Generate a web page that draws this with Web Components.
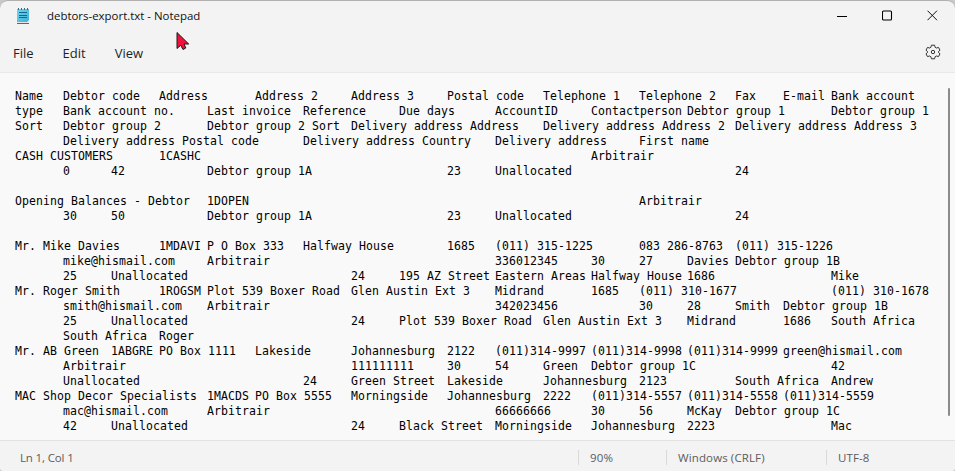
<!DOCTYPE html>
<html lang="en">
<head>
<meta charset="utf-8">
<title>debtors-export.txt - Notepad</title>
<style>
html,body{margin:0;height:100%;overflow:hidden;background:#c9c9c9}
</style>
</head>
<body>
<notepad-window></notepad-window>
<script>
const define = (name, html, setup) => customElements.define(name, class extends HTMLElement {
  constructor() {
    super();
    this.attachShadow({mode: 'open'}).innerHTML = html;
  }
  connectedCallback() { if (setup) setup(this, this.shadowRoot); }
});

define('app-icon', `<style>:host{display:block;width:13px;height:17px}svg{display:block}</style>
<svg width="13" height="17" viewBox="0 0 13 17">
<defs><linearGradient id="g" x1="0" y1="0" x2="1" y2="1"><stop offset="0" stop-color="#6fd6ee"/><stop offset="1" stop-color="#3fb0d8"/></linearGradient></defs>
<path d="M0 14h10l2-2v3H0z" fill="#e8e4df"/><path d="M0 15h12v1H0z" fill="#a8501f"/>
<path d="M0 1h12v11l-2 2H0z" fill="url(#g)"/>
<path d="M1.500 0v2M4.500 0v2M7.500 0v2M10.500 0v2" stroke="#2f6f88"/>
<path d="M2 4.500h8M2 7.500h8M2 9.500h8" stroke="#14688b"/></svg>`);

define('window-controls', `<style>:host{display:flex;align-items:center;gap:34px}svg{display:block}</style>
<svg width="11" height="11" viewBox="0 0 11 11"><path d="M0 6.500h10" stroke="#000"/></svg>
<svg width="11" height="11" viewBox="0 0 11 11"><rect x=".5" y="1" width="9" height="9" rx="1" fill="none" stroke="#000" stroke-width="1.100"/></svg>
<svg width="11" height="11" viewBox="0 0 11 11"><path d="M.5.7l9.500 9.500M10 .7L.5 10.200" stroke="#111"/></svg>`);

define('title-bar', `<style>
:host{display:flex;align-items:center;height:28px;padding:0 16px 0 17px;font-size:11.450px;color:#111}
app-icon{margin:2px 17px 0 0}span{flex:1;white-space:pre}
window-controls{margin-right:1px}
</style><app-icon></app-icon><span><slot></slot></span><window-controls></window-controls>`);

define('settings-gear', `<style>:host{display:block;width:16px;height:16px}svg{display:block}</style>
<svg width="16" height="16" viewBox="0 0 16 16" fill="none" stroke="#333" stroke-linejoin="round">
<path d="M6.400 1.200h3.200l.5 2.100 1.300.7 2.100-.6 1.500 2.800-1.500 1.300v1l1.500 1.300-1.500 2.800-2.100-.6-1.300.7-.5 2.100H6.400l-.5-2.100-1.300-.7-2.100.6L1 9.800l1.500-1.300v-1L1 6.200l1.500-2.800 2.100.6 1.300-.7z"/><circle cx="8" cy="8" r="1.700"/></svg>`);

define('menu-bar', `<style>
:host{display:flex;align-items:center;height:43px;padding:5px 14px 0 13px;font-size:13px;color:#1f1f1f;box-sizing:border-box}
div{flex:1;display:flex;gap:29px}
settings-gear{margin-top:-3px}
</style><div><slot></slot></div><settings-gear></settings-gear>`);

define('text-line', `<style>
:host{display:grid;grid-template-columns:repeat(18,48px);height:15px;line-height:15px;white-space:pre}
span{grid-row:1;width:0}
</style>`, (el, root) => {
  for (const part of el.getAttribute('cells').split(';')) {
    if (!part) continue;
    const m = part.match(/^(\d+) (.*)$/);
    const s = document.createElement('span');
    s.style.gridColumn = +m[1] + 1;
    s.textContent = m[2];
    root.append(s);
  }
});

const LINES = `0 Name;1 Debtor code;3 Address;5 Address 2;7 Address 3;9 Postal code;11 Telephone 1;13 Telephone 2;15 Fax;16 E-mail;17 Bank account
0 type;1 Bank account no.;4 Last invoice;6 Reference;8 Due days;10 AccountID;12 Contactperson;14 Debtor group 1;17 Debtor group 1
0 Sort;1 Debtor group 2;4 Debtor group 2 Sort;7 Delivery address Address;11 Delivery address Address 2;15 Delivery address Address 3
1 Delivery address Postal code;6 Delivery address Country;10 Delivery address;13 First name
0 CASH CUSTOMERS;3 1CASHC;12 Arbitrair
1 0;2 42;4 Debtor group 1A;9 23;10 Unallocated;15 24

0 Opening Balances - Debtor;4 1DOPEN;13 Arbitrair
1 30;2 50;4 Debtor group 1A;9 23;10 Unallocated;15 24

0 Mr. Mike Davies;3 1MDAVI;4 P O Box 333;6 Halfway House;9 1685;10 (011) 315-1225;13 083 286-8763;15 (011) 315-1226
1 mike@hismail.com;4 Arbitrair;10 336012345;12 30;13 27;14 Davies;15 Debtor group 1B
1 25;2 Unallocated;7 24;8 195 AZ Street;10 Eastern Areas;12 Halfway House;14 1686;17 Mike
0 Mr. Roger Smith;3 1ROGSM;4 Plot 539 Boxer Road;7 Glen Austin Ext 3;10 Midrand;12 1685;13 (011) 310-1677;17 (011) 310-1678
1 smith@hismail.com;4 Arbitrair;10 342023456;13 30;14 28;15 Smith;16 Debtor group 1B
1 25;2 Unallocated;7 24;8 Plot 539 Boxer Road;11 Glen Austin Ext 3;14 Midrand;16 1686;17 South Africa
1 South Africa;3 Roger
0 Mr. AB Green;2 1ABGRE;3 PO Box 1111;5 Lakeside;7 Johannesburg;9 2122;10 (011)314-9997;12 (011)314-9998;14 (011)314-9999;16 green@hismail.com
1 Arbitrair;7 111111111;9 30;10 54;11 Green;12 Debtor group 1C;17 42
1 Unallocated;6 24;7 Green Street;9 Lakeside;11 Johannesburg;13 2123;15 South Africa;17 Andrew
0 MAC Shop Decor Specialists;4 1MACDS;5 PO Box 5555;7 Morningside;9 Johannesburg;11 2222;12 (011)314-5557;14 (011)314-5558;16 (011)314-5559
1 mac@hismail.com;4 Arbitrair;10 66666666;12 30;13 56;14 McKay;15 Debtor group 1C
1 42;2 Unallocated;7 24;8 Black Street;10 Morningside;12 Johannesburg;14 2223;17 Mac`.split('\n');

define('text-editor', `<style>
:host{flex:1;min-height:0;display:flex;justify-content:space-between;background:#f9f9f9;border-top:1px solid #e9e9e9;border-bottom:1px solid #e2e2e2;padding:15px 5px 0 15px;box-sizing:border-box}
main{font:11.500px/15px "DejaVu Sans Mono",monospace;letter-spacing:.077px;color:#000;padding-top:1px}
i{width:2px;height:328px;background:#8b8b8b;border-radius:1px}
</style><main></main><i></i>`, (el, root) => {
  for (const l of LINES) {
    const t = document.createElement('text-line');
    t.setAttribute('cells', l);
    root.querySelector('main').append(t);
  }
});

define('status-bar', `<style>
:host{display:grid;grid-template-columns:558px 88px 160px 1fr;align-items:center;height:30px;padding:3px 0 0 20px;font-size:11.500px;color:#5c5c5c;box-sizing:border-box}
::slotted(span){display:block;line-height:16px;letter-spacing:.12px}
::slotted(span:first-child){letter-spacing:-.15px}
::slotted(span:not(:first-child)){background:linear-gradient(#d9d9d9,#d9d9d9) 0 0/1px 15px no-repeat;padding-left:12px}
</style><slot></slot>`);

define('mouse-pointer', `<style>:host{position:absolute;left:176px;top:30px}svg{display:block}</style>
<svg width="15" height="20" viewBox="0 0 15 20"><path d="M1 1.500v16l3.700-3.200 2.300 4.200 2.800-1.500-1.800-4h4.700z" fill="#f5103c" stroke="#1a1a1a"/></svg>`);

define('notepad-window', `<style>
:host{display:flex;flex-direction:column;position:relative;height:471px;box-sizing:border-box;border-top:1px solid #b0b0b0;border-radius:8px 8px 3px 3px;overflow:hidden;background:#f3f3f3;font-family:"Open Sans","Noto Sans",sans-serif}
</style>
<title-bar>debtors-export.txt - Notepad</title-bar>
<menu-bar><span>File</span><span>Edit</span><span>View</span></menu-bar>
<text-editor></text-editor>
<status-bar><span>Ln 1, Col 1</span><span>90%</span><span>Windows (CRLF)</span><span>UTF-8</span></status-bar>
<mouse-pointer></mouse-pointer>`);
</script>
</body>
</html>
